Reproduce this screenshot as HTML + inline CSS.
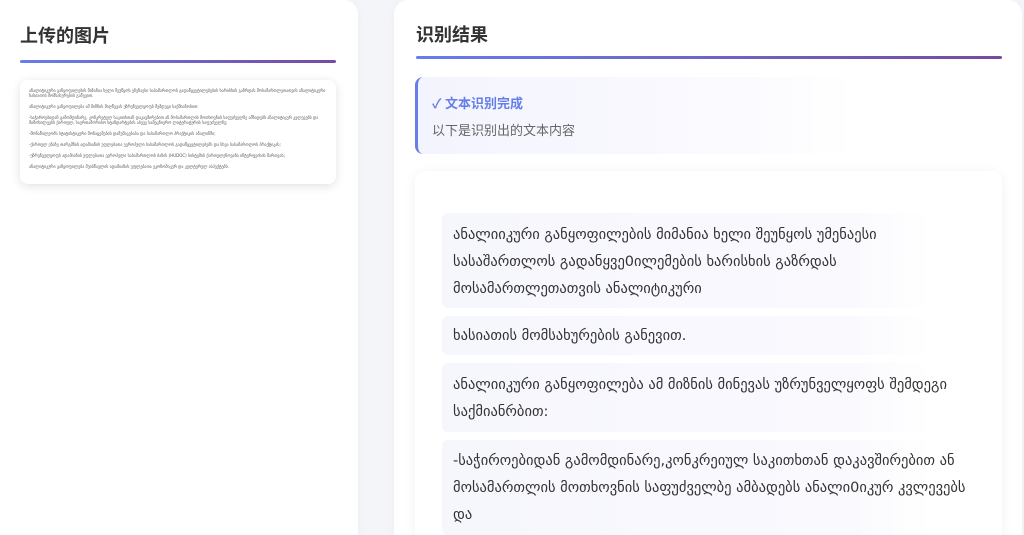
<!DOCTYPE html>
<html style="width:1024px;height:535px;overflow:hidden"><head><meta charset="utf-8"><style>
*{margin:0;padding:0;box-sizing:border-box}
body{width:1024px;height:535px;overflow:hidden;background:#f4f5f9;font-family:"Liberation Sans","Noto Sans CJK SC","DejaVu Sans",sans-serif;position:relative}
.card{position:absolute;background:#fff;border-radius:14px;box-shadow:0 2px 10px rgba(0,0,0,.04)}
h2{position:absolute;font-size:18px;font-weight:bold;color:#333}
.line{position:absolute;height:3px;background:linear-gradient(90deg,#667eea,#764ba2);border-radius:2px}
.img{position:absolute;left:20px;top:80px;width:316px;height:104px;background:#fff;border-radius:8px;box-shadow:0 2px 10px rgba(0,0,0,.12);padding:8px 9px;font-family:"DejaVu Sans",sans-serif;font-size:4px;color:#555;line-height:5px}
.img p{margin-bottom:6px;white-space:nowrap;overflow:hidden}
.status{position:absolute;left:415px;top:77px;width:440px;height:77px;border-left:3px solid #667eea;border-radius:8px;background:linear-gradient(90deg,#f3f4fd,#fafaff 70%,rgba(255,255,255,0))}
.para{position:absolute;left:442px;width:490px;background:linear-gradient(90deg,#f6f6fd,#f9f9fe 80%,#fff);border-radius:6px;padding:0 11px;font-family:"DejaVu Sans",sans-serif;font-size:14.5px;color:#333;line-height:27px;white-space:nowrap}
</style></head><body>
<div class="card" style="left:0;top:0;width:358px;height:535px;border-radius:0 14px 0 0"></div>
<h2 style="left:20px;top:22px">上传的图片</h2>
<div class="line" style="left:20px;top:60px;width:316px"></div>
<div class="img">
<p>ანალიტიკური განყოფილების მიზანია ხელი შეუწყოს უზენაესი სასამართლოს გადაწყვეტილებების ხარისხის გაზრდას მოსამართლეთათვის ანალიტიკური<br>ხასიათის მომსახურების გაწევით.</p>
<p>ანალიტიკური განყოფილება ამ მიზნის მიღწევას უზრუნველყოფს შემდეგი საქმიანობით:</p>
<p>-საჭიროებიდან გამომდინარე, კონკრეტულ საკითხთან დაკავშირებით ან მოსამართლის მოთხოვნის საფუძველზე ამზადებს ანალიტიკურ კვლევებს და<br>მიმოხილვებს ქართულ, საერთაშორისო სტანდარტების ასევე სამეცნიერო ლიტერატურის საფუძველზე;</p>
<p>-მონაწილეობს სტატისტიკური მონაცემების დამუშავებასა და სასამართლო პრაქტიკის ანალიზში;</p>
<p>-ქართულ ენაზე თარგმნის ადამიანის უფლებათა ევროპული სასამართლოს გადაწყვეტილებებს და სხვა სასამართლოს პრაქტიკას;</p>
<p>-უზრუნველყოფს ადამიანის უფლებათა ევროპული სასამართლოს ბაზის (HUDOC) სისტემის ქართულენოვანი ინტერფეისის მართვას;</p>
<p>ანალიტიკური განყოფილება შეისწავლის ადამიანის უფლებათა ეკონომიკურ და კულტურულ ასპექტებს.</p>
</div>
<div class="card" style="left:394px;top:0;width:628px;height:535px;border-radius:14px 14px 0 0"></div>
<h2 style="left:416px;top:21px">识别结果</h2>
<div class="line" style="left:416px;top:56px;width:586px"></div>
<div class="status">
<div style="position:absolute;left:14px;top:16px;font-size:13px;font-weight:bold;color:#667eea">✓ 文本识别完成</div>
<div style="position:absolute;left:14px;top:43px;font-size:13px;color:#666">以下是识别出的文本内容</div>
</div>
<div class="card" style="left:415px;top:171px;width:587px;height:364px;border-radius:10px 10px 0 0;box-shadow:0 2px 12px rgba(0,0,0,.06)"></div>
<div class="para" style="top:213px;height:95px;padding-top:9px">ანალიიკური განყოფილების მიმანია ხელი შეუნყოს უმენაესი<br>სასაშართლოს გადანყვე0ილემების ხარისხის გაზრდას<br>მოსამართლეთათვის ანალიტიკური</div>
<div class="para" style="top:316px;height:39px;padding-top:7px">ხასიათის მომსახურების განევით.</div>
<div class="para" style="top:363px;height:69px;padding-top:9px">ანალიიკური განყოფილება ამ მიზნის მინევას უზრუნველყოფს შემდეგი<br>საქმიანრბით:</div>
<div class="para" style="top:440px;height:95px;padding-top:8px">-საჭიროებიდან გამომდინარე,კონკრეიულ საკითხთან დაკავშირებით ან<br>მოსამართლის მოთხოვნის საფუძველბე ამბადებს ანალი0იკურ კვლევებს<br>და</div>
</body></html>
